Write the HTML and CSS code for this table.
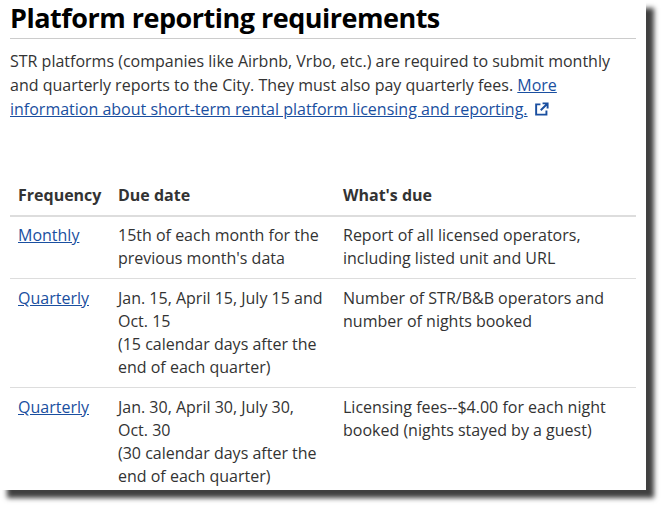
FILE: index.html
```html
<!DOCTYPE html>
<html lang="en">
<head>
<meta charset="utf-8">
<link rel="stylesheet" href="styles.css">
</head>
<body>
<div class="frame">
<div class="panel">
  <h2 class="title">Platform reporting requirements</h2>
  <p class="intro">STR platforms (companies like Airbnb, Vrbo, etc.) are required to submit monthly and quarterly reports to the City. They must also pay quarterly fees. <a href="#">More information about short-term rental platform licensing and reporting.</a> <svg class="ext" width="15" height="15" viewBox="0 0 14 14"><path d="M6 2.2H2v9.6h9.6V8" fill="none" stroke="#1a4fa0" stroke-width="1.8"/><path d="M8 1.3h4.7V6M12.4 1.6 6.3 7.7" fill="none" stroke="#1a4fa0" stroke-width="1.8"/></svg></p>
  <table class="req">
    <thead>
      <tr><th class="c1">Frequency</th><th class="c2">Due date</th><th class="c3">What's due</th></tr>
    </thead>
    <tbody>
      <tr><td><a href="#">Monthly</a></td><td>15th of each month for the previous month's data</td><td>Report of all licensed operators, including listed unit and URL</td></tr>
      <tr><td><a href="#">Quarterly</a></td><td>Jan. 15, April 15, July 15 and Oct. 15<br>(15 calendar days after the end of each quarter)</td><td>Number of STR/B&amp;B operators and number of nights booked</td></tr>
      <tr><td><a href="#">Quarterly</a></td><td>Jan. 30, April 30, July 30, Oct. 30<br>(30 calendar days after the end of each quarter)</td><td>Licensing fees--$4.00 for each night booked (nights stayed by a guest)</td></tr>
    </tbody>
  </table>
</div>
</div>
</body>
</html>
```
FILE: styles.css
```css
html, body {
  margin: 0;
  padding: 0;
  background: #ffffff;
}
body {
  font-family: "Open Sans", "Liberation Sans", sans-serif;
  color: #333333;
}
.frame {
  width: 661px;
  height: 507px;
  overflow: hidden;
}
.panel {
  width: 626px;
  height: 490px;
  padding: 0 10px 0 10px;
  box-sizing: content-box;
  overflow: hidden;
  background: #ffffff;
  border-left: 1px solid #e2e2e2;
  box-shadow: 8px 8px 5px 0 #404040;
  margin-left: -1px;
}
.title {
  margin: 0;
  padding: 1px 0 4px;
  font-family: "Open Sans", sans-serif;
  font-weight: 700;
  font-size: 27px;
  line-height: 33px;
  letter-spacing: -0.5px;
  color: #000000;
  border-bottom: 1px solid #cccccc;
}
.intro {
  margin: 10px 0 0;
  font-size: 16px;
  line-height: 24px;
}
a {
  color: #1a4fa0;
  text-decoration: underline;
}
.ext {
  vertical-align: -2px;
  margin-left: 2px;
}
.req {
  margin-top: 55px;
  width: 626px;
  border-collapse: collapse;
  font-size: 16px;
  line-height: 23px;
}
.req th {
  text-align: left;
  font-weight: 700;
  padding: 8px 8px;
  border-bottom: 2px solid #dddddd;
}
.req td {
  vertical-align: top;
  padding: 8px 8px;
  border-bottom: 1px solid #dddddd;
}
.req tbody tr:first-child td { padding-top: 7px; }
.c1 { width: 84px; }
.c2 { width: 209px; }
```
